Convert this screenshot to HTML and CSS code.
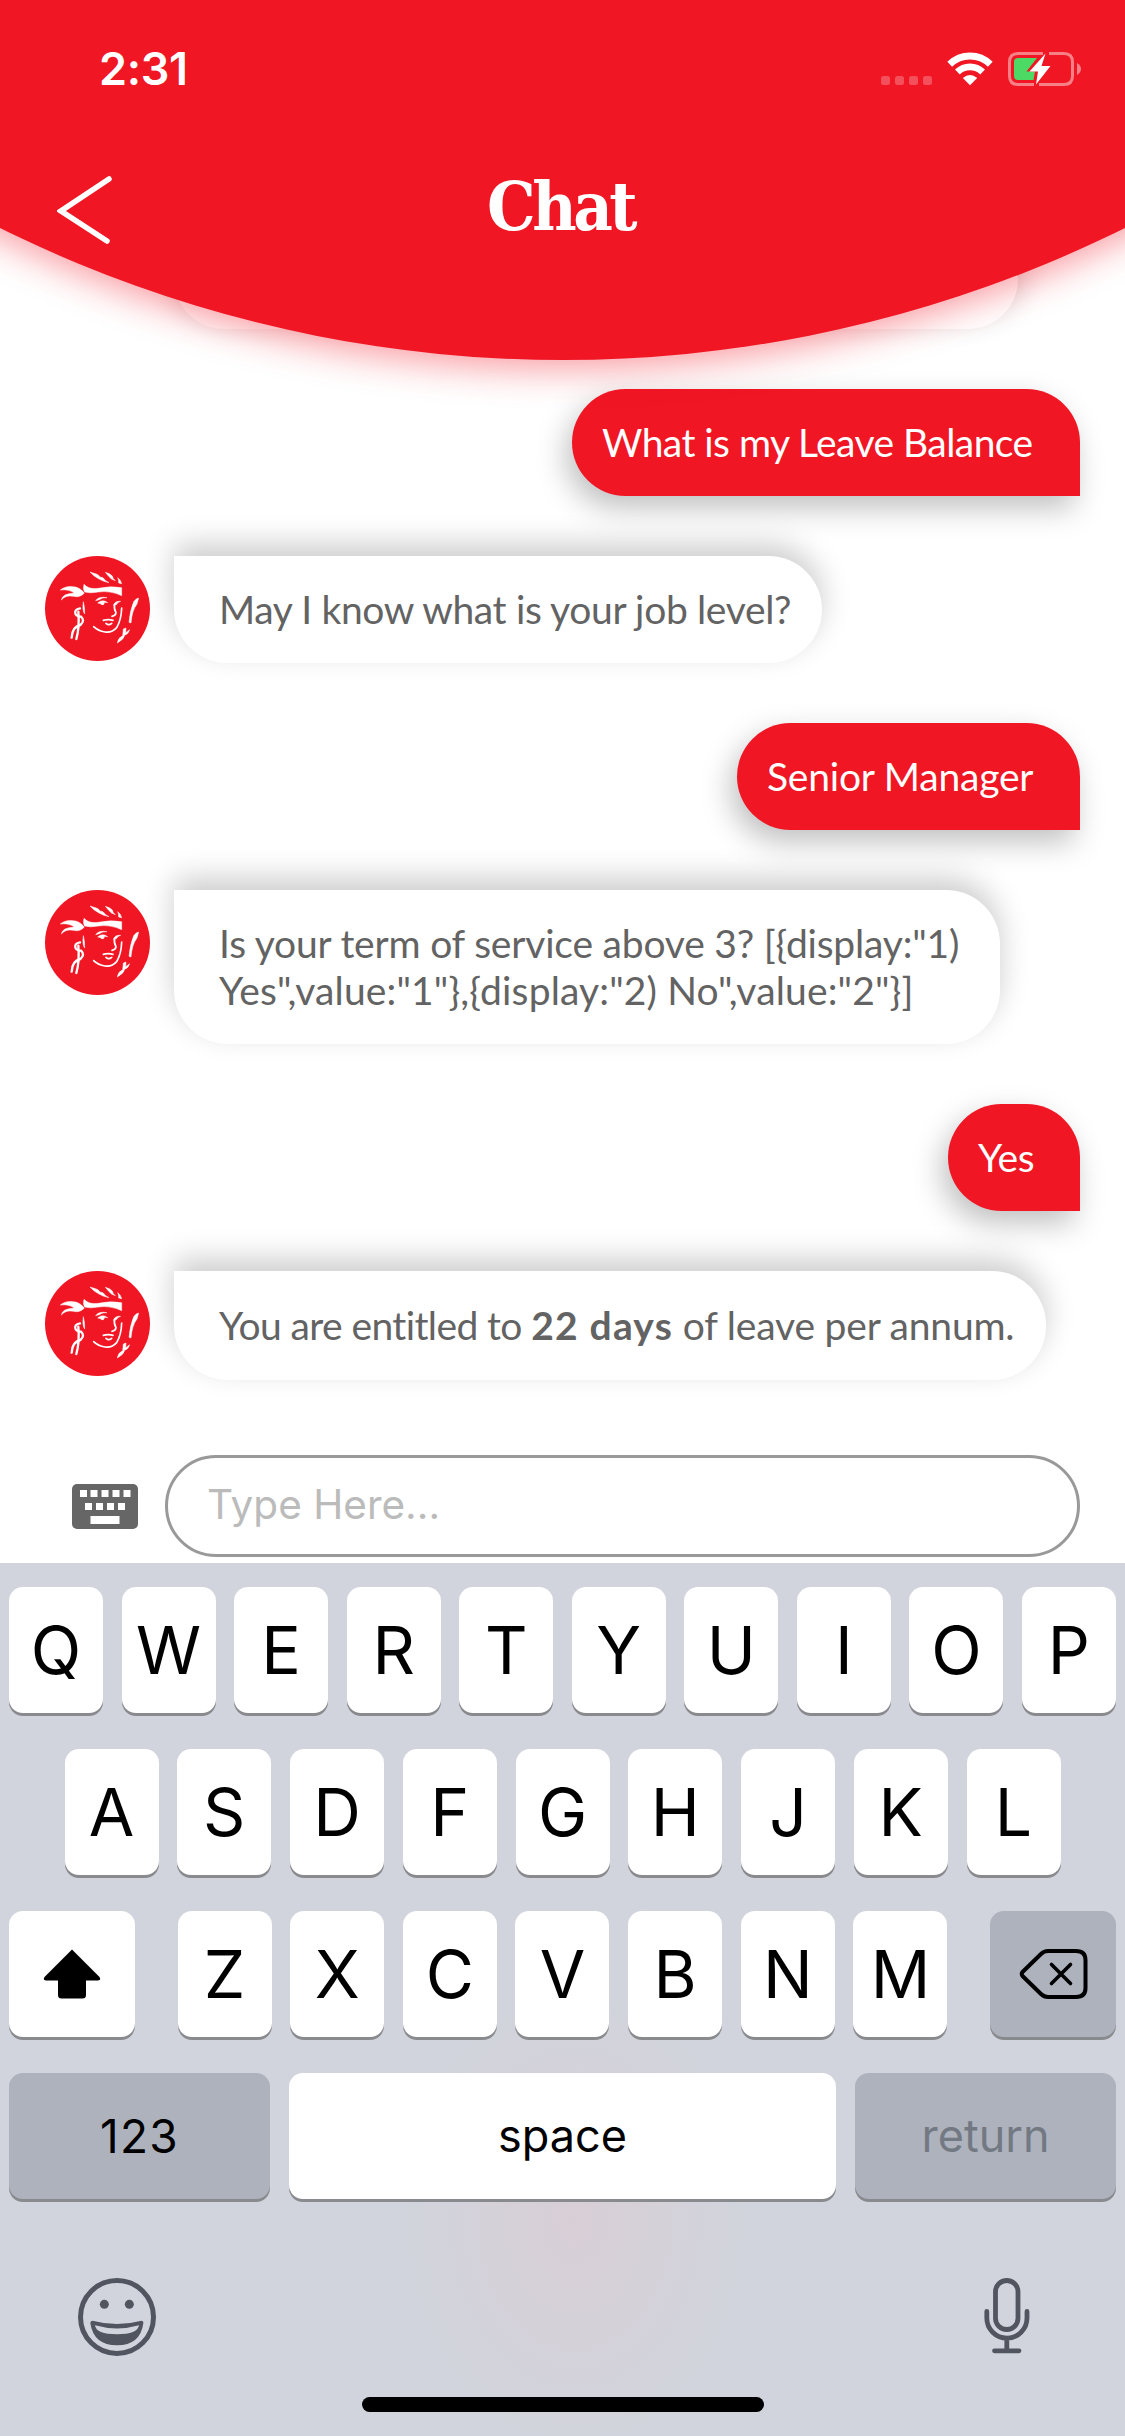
FILE: index.html
```html
<!DOCTYPE html>
<html lang="en">
<head>
<meta charset="utf-8">
<title>Chat</title>
<link rel="stylesheet" href="styles.css">
</head>
<body>
<svg class="defs" width="0" height="0" aria-hidden="true">
  <symbol id="face" viewBox="45 47 315 315">
    <g fill="#fff" stroke="#fff" stroke-width="1.5">
      <path d="M180 95L199 101Q206 103 210 110L219 112Q226 122 237 127Q220 124 207 116Q191 108 180 95Z"/>
      <path d="M226 96Q240 99 247 107L250 115L256 121Q243 118 236 108Z"/>
      <path d="M263 112Q273 118 275 130L266 128Q267 118 263 112Z"/>
      <path d="M162 132Q176 148 205 144Q240 136 275 142L275 166Q240 150 205 155Q180 160 164 155Q158 146 162 132Z"/>
      <path d="M91 149Q108 134 137 140Q152 144 163 158Q150 173 130 168Q108 163 94 179Q96 160 133 158Q116 146 91 149Z"/>
      <path d="M197 181Q206 167 231 172Q216 171 208 178Z"/>
      <path d="M203 188Q218 175 233 187L224 186Q222 196 215 193Q211 188 203 188Z"/>
      <path d="M250 196Q254 181 272 183L263 187Q261 196 254 192Z"/>
      <path d="M326 173L321 191Q306 210 303 248L297 246Q300 210 311 184Q318 174 326 173Z"/>
      <path d="M280 266L288 263L287 277L299 268Q296 280 284 285Q282 297 262 308Q264 292 278 286Z"/>
      <path d="M160 184Q165 202 164 221Q156 210 160 184Z"/>
    </g>
    <g fill="none" stroke="#fff" stroke-width="5" stroke-linecap="round">
      <path d="M254 192Q251 205 258 217Q257 226 246 228"/>
      <path d="M220 240Q235 236 249 240M228 249Q236 257 245 249"/>
      <path d="M275 203Q274 238 260 262Q246 278 225 275Q204 272 191 259"/>
      <path d="M150 204Q131 207 137 222Q142 229 153 229Q166 241 151 254Q126 260 125 292" stroke-width="7"/>
      <path d="M145 214Q149 262 139 296" stroke-width="7"/>
    </g>
  </symbol>
</svg>

<header class="header">
  <div class="backdrop"></div>
  <div class="status">
    <span class="status-time">2:31</span>
    <svg class="status-icons" width="202" height="36" viewBox="880 51 202 36">
      <g fill="#fff" fill-opacity=".25">
        <rect x="881" y="76" width="9" height="9" rx="2.5"/><rect x="895" y="76" width="9" height="9" rx="2.5"/>
        <rect x="909" y="76" width="9" height="9" rx="2.5"/><rect x="923" y="76" width="9" height="9" rx="2.5"/>
      </g>
      <g fill="none" stroke="#fff" stroke-width="6.8">
        <path d="M949.700 64.300A29 29 0 0 1 990.300 64.300"/>
        <path d="M957.400 72A18 18 0 0 1 982.600 72"/>
      </g>
      <path fill="#fff" d="M970 85.200L962.800 78Q970 71.800 977.200 78Z"/>
      <g fill="none" stroke="#fff" stroke-opacity=".45" stroke-width="3">
        <path d="M1043 53.500H1018Q1009.500 53.500 1009.500 62V76Q1009.500 84.500 1018 84.500H1034"/>
        <path d="M1049 53.500H1064Q1072.500 53.500 1072.500 62V76Q1072.500 84.500 1064 84.500H1039"/>
      </g>
      <path fill="#fff" fill-opacity=".45" d="M1077 63Q1081 65.500 1081 69T1077 75Z"/>
      <path fill="#4cd964" d="M1018 58H1037L1026.500 71.500H1035L1033.500 80H1018Q1014 80 1014 76V62Q1014 58 1018 58Z"/>
      <path fill="#fff" d="M1045.500 53.500L1029.500 71.500H1038L1036 84.500L1050.500 66H1041.500Z"/>
    </svg>
  </div>
  <div class="titlebar">
    <svg class="back" width="58" height="70" viewBox="0 0 58 70"><path d="M52 4L4 36L50 66" fill="none" stroke="#fff" stroke-width="5.500" stroke-linecap="round"/></svg>
    <h1 class="title">Chat</h1>
  </div>
</header>

<main class="chat">
  <div class="bubble bot previous"></div>
  <div class="row mine"><p class="bubble user balance">What is my Leave Balance</p></div>
  <div class="row"><svg class="avatar"><use href="#face"/></svg><p class="bubble bot level">May I know what is your job level?</p></div>
  <div class="row mine"><p class="bubble user manager">Senior Manager</p></div>
  <div class="row"><svg class="avatar"><use href="#face"/></svg><p class="bubble bot term"><span class="line1">Is your term of service above 3? [{display:"1)</span><br><span class="line2">Yes",value:"1"},{display:"2) No",value:"2"}]</span></p></div>
  <div class="row mine"><p class="bubble user yes">Yes</p></div>
  <div class="row"><svg class="avatar"><use href="#face"/></svg><p class="bubble bot answer"><span class="lead">You are entitled to </span><b>22 days</b> of leave per annum.</p></div>
</main>

<div class="composer">
  <svg width="66" height="45" viewBox="0 0 66 45">
    <rect width="66" height="45" rx="5" fill="#666"/>
    <g fill="#fff"><path d="M8 6h7v7H8zM18.500 6h7v7h-7zM29.500 6h7v7h-7zM40.500 6h7v7h-7zM51.500 6h7v7h-7zM13 19h7v7h-7zM24 19h7v7h-7zM35 19h7v7h-7zM46 19h7v7h-7zM18.500 32h29v8h-29z"/></g>
  </svg>
  <div class="field">Type Here...</div>
</div>

<section class="keyboard">
  <div class="keys"><span class="key">Q</span><span class="key">W</span><span class="key">E</span><span class="key">R</span><span class="key">T</span><span class="key">Y</span><span class="key">U</span><span class="key">I</span><span class="key">O</span><span class="key">P</span></div>
  <div class="keys inset"><span class="key">A</span><span class="key">S</span><span class="key">D</span><span class="key">F</span><span class="key">G</span><span class="key">H</span><span class="key">J</span><span class="key">K</span><span class="key">L</span></div>
  <div class="keys">
    <span class="key shift"><svg width="58" height="50" viewBox="0 0 58 50"><path d="M29 0.500L56.500 28Q58.500 31.500 55 31.500H43V46Q43 49.500 39.500 49.500H18.500Q15 49.500 15 46V31.500H3Q-0.500 31.500 1.500 28Z"/></svg></span>
    <div class="letters"><span class="key">Z</span><span class="key">X</span><span class="key">C</span><span class="key">V</span><span class="key">B</span><span class="key">N</span><span class="key">M</span></div>
    <span class="key dark delete"><svg width="69" height="50" viewBox="0 0 69 50" fill="none" stroke="#000" stroke-linecap="round" stroke-linejoin="round"><path stroke-width="4" d="M29 2H57Q66.500 2 66.500 11V39Q66.500 48 57 48H29Q25 48 22 45L3.500 27Q2 25 3.500 23L22 5Q25 2 29 2Z"/><path stroke-width="3.600" d="M32.500 15.500L51.500 34.500M51.500 15.500L32.500 34.500"/></svg></span>
  </div>
  <div class="keys bottom"><span class="key dark wide digits">123</span><span class="key space">space</span><span class="key dark wide return">return</span></div>
  <div class="tools">
    <svg width="78" height="78" viewBox="78 78 234 234" fill="#50555f">
      <circle cx="195" cy="195" r="109.500" fill="none" stroke="#50555f" stroke-width="15"/>
      <circle cx="157" cy="157" r="13.500"/><circle cx="232" cy="157" r="13.500"/>
      <path fill-rule="evenodd" d="M122 206Q195 226 268 206Q275 206 274 214Q265 280 195 280Q125 280 115 214Q115 206 122 206ZM129 220Q132 247 195 247Q257 247 261 220Q195 239 129 220Z"/>
    </svg>
    <svg width="46" height="76" viewBox="0 0 46 76" fill="none" stroke="#50555f" stroke-width="4.800" stroke-linecap="round"><rect x="11.500" y="2.500" width="22.500" height="49" rx="11.250"/><path d="M2.800 33.500V40A20 20 0 0 0 43 40V33.500M22.800 61V72M10.500 72.800H35"/></svg>
  </div>
  <div class="home"></div>
</section>
</body>
</html>
```
FILE: styles.css
```css
* { box-sizing: border-box; }

body {
  margin: 0;
  width: 1125px;
  height: 2436px;
  overflow: hidden;
  display: flex;
  flex-direction: column;
  background: #fff;
  color: #636363;
  font-family: Lato, "Open Sans", sans-serif;
}

svg { display: block; flex: none; }
.defs { position: absolute; }

/* Header: the lower edge is an arc of a very large circle */
.header {
  position: relative;
  z-index: 1;
  flex: none;
  height: 229px;
  color: #fff;
}

.backdrop {
  position: absolute;
  z-index: -1;
  inset: 0 0 auto;
  height: 430px;
  overflow: hidden;
}

.backdrop::before {
  content: "";
  position: absolute;
  left: calc(50% - 1264.5px);
  top: -2169px;
  width: 2529px;
  height: 2529px;
  border-radius: 50%;
  background: #f01624;
  box-shadow: 0 9px 36px rgba(240, 22, 36, .42);
}

.status {
  display: flex;
  justify-content: space-between;
  padding: 51px 43px 0 99px;
  height: 140px;
}

.status-time {
  font: 600 45px/36px Inter, sans-serif;
  letter-spacing: -.3px;
}

.titlebar {
  display: grid;
  grid-template-columns: 58px 1fr 58px;
  padding: 35px 55px 0 57px;
}

.title {
  margin: 0;
  text-align: center;
  font: bold 68px/63px "DejaVu Serif Condensed", "DejaVu Serif", serif;
  font-stretch: condensed;
  letter-spacing: -3.5px;
  text-indent: -6px;
}

/* Conversation */
.chat {
  flex: none;
  height: 1226px;
  padding: 0 45px;
  display: flex;
  flex-direction: column;
  gap: 60px;
}

.row { display: flex; align-items: flex-start; gap: 24px; }
.mine { justify-content: flex-end; }

.avatar {
  width: 105px;
  height: 105px;
  border-radius: 50%;
  background: #f01624;
}

.bubble {
  margin: 0;
  min-height: 107px;
  padding: 30px 0 30px 45px;
  font-size: 39px;
  line-height: 47px;
  white-space: nowrap;
}

.bot {
  background: #fff;
  border-radius: 0 54px 54px 54px;
  box-shadow: 0 -12px 30px rgba(0, 0, 0, .2);
}

.user {
  padding-left: 30px;
  color: #fff;
  background: #f01624;
  border-radius: 54px 54px 0 54px;
  box-shadow: -6px 12px 30px rgba(0, 0, 0, .25);
}

.previous { flex: none; width: 844px; height: 100px; min-height: 0; margin-left: 129px; }
.balance { width: 508px; letter-spacing: -.55px; }
.level { width: 648px; letter-spacing: -.35px; }
.manager { width: 343px; letter-spacing: -.2px; }
.term { width: 826px; height: 154px; }
.line1 { letter-spacing: -.2px; }
.line2 { letter-spacing: .15px; }
.yes { width: 132px; letter-spacing: -.5px; }
.answer { width: 872px; height: 109px; padding-top: 31px; letter-spacing: -.2px; }
.lead { letter-spacing: -.6px; }
.answer b { letter-spacing: 1.2px; }

.composer {
  flex: none;
  height: 108px;
  padding: 0 45px 6px 72px;
  display: flex;
  align-items: center;
  gap: 27px;
}

.field {
  flex: 1;
  height: 102px;
  padding-left: 39px;
  border: 3px solid #999;
  border-radius: 51px;
  color: #bbb;
  font: 400 40.5px/94px Inter, sans-serif;
}

/* On-screen keyboard */
.keyboard {
  flex: 1;
  padding: 24px 9px 0;
  background: radial-gradient(ellipse 170px 230px at 575px 655px, #d8ced6, rgba(216, 206, 214, 0)) #d1d4dc;
  color: #000;
  font: 66px/126px Inter, sans-serif;
}

.keys {
  display: flex;
  justify-content: space-between;
  margin-bottom: 36px;
}

.inset { padding: 0 55.5px; }
.letters { display: flex; justify-content: space-between; width: 770px; }

.key {
  display: flex;
  justify-content: center;
  align-items: center;
  width: 94px;
  height: 126px;
  border-radius: 14px;
  background: #fff;
  box-shadow: 0 3px 0 #898a8d;
}

.shift, .delete { width: 126px; }
.dark { background: #adb2bd; }
.bottom { font-size: 45px; }
.digits { font-size: 46px; letter-spacing: 1.2px; }
.wide { width: 261px; }
.space { width: 547px; }
.return { color: #737983; }

.tools {
  display: flex;
  justify-content: space-between;
  padding: 43px 86px 0 69px;
}

.home {
  width: 402px;
  height: 15px;
  margin: 41px auto 0;
  border-radius: 8px;
  background: #000;
}
```
